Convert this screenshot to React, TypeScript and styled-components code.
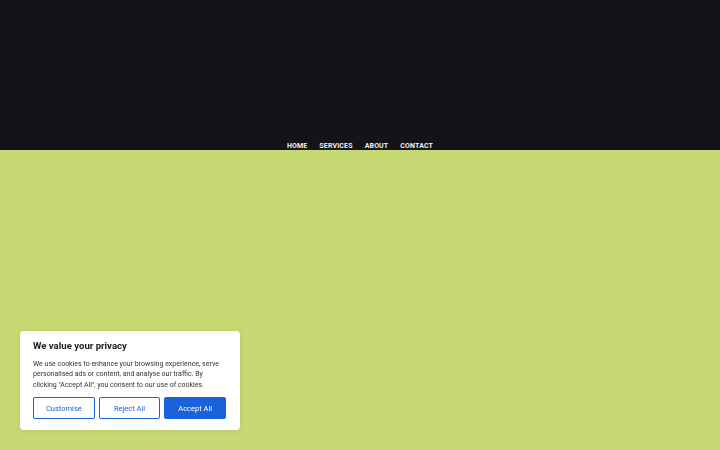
import React from 'react';
import styled, { createGlobalStyle } from 'styled-components';

const GlobalStyle = createGlobalStyle`
  html, body {
    margin: 0;
    padding: 0;
    height: 100%;
    background: #c6d972;
    font-family: Roboto, "Liberation Sans", Arial, sans-serif;
  }
  #root {
    min-height: 100vh;
  }
`;

const Page = styled.div`
  min-height: 100vh;
  display: flex;
  flex-direction: column;
  background: #c6d972;
`;

const Header = styled.header`
  height: 150px;
  background: #131318;
  display: flex;
  align-items: flex-end;
  justify-content: center;
  overflow: hidden;
`;

const Nav = styled.nav`
  display: flex;
  gap: 12px;
  margin-bottom: 0;
`;

const NavLink = styled.a`
  color: #f2f2f2;
  font-family: Roboto, "Liberation Sans", Arial, sans-serif;
  font-size: 7px;
  line-height: 8px;
  font-weight: 700;
  letter-spacing: 0.15px;
  text-transform: uppercase;
  text-decoration: none;
`;

const Main = styled.main`
  flex: 1;
`;

const Banner = styled.div`
  position: fixed;
  left: 20px;
  bottom: 20px;
  width: 220px;
  box-sizing: border-box;
  padding: 9px 14px 11px 13px;
  background: #ffffff;
  border-radius: 4px;
  box-shadow: 0 1px 6px rgba(0, 0, 0, 0.08);
`;

const Title = styled.p`
  margin: 0 0 7px;
  font-size: 9.6px;
  line-height: 12px;
  font-weight: 700;
  color: #212121;
`;

const Body = styled.p`
  margin: 0 0 7px;
  font-size: 7px;
  line-height: 10.5px;
  color: #333333;
`;

const Buttons = styled.div`
  display: flex;
  gap: 4px;
`;

const Button = styled.button<{ $primary?: boolean }>`
  flex: 1;
  height: 22px;
  padding: 0;
  border: 1.5px solid #1863dc;
  border-radius: 2px;
  background: ${p => (p.$primary ? '#1863dc' : '#ffffff')};
  color: ${p => (p.$primary ? '#ffffff' : '#1863dc')};
  font-family: Roboto, "Liberation Sans", Arial, sans-serif;
  font-size: 7.5px;
  font-weight: 400;
  cursor: pointer;
`;

export default function App() {
  return (
    <>
      <GlobalStyle />
      <Page>
        <Header>
          <Nav>
            <NavLink href="#">Home</NavLink>
            <NavLink href="#">Services</NavLink>
            <NavLink href="#">About</NavLink>
            <NavLink href="#">Contact</NavLink>
          </Nav>
        </Header>
        <Main />
      </Page>
      <Banner>
        <Title>We value your privacy</Title>
        <Body>
          We use cookies to enhance your browsing experience, serve personalised ads or content, and
          analyse our traffic. By clicking "Accept All", you consent to our use of cookies.
        </Body>
        <Buttons>
          <Button>Customise</Button>
          <Button>Reject All</Button>
          <Button $primary>Accept All</Button>
        </Buttons>
      </Banner>
    </>
  );
}
